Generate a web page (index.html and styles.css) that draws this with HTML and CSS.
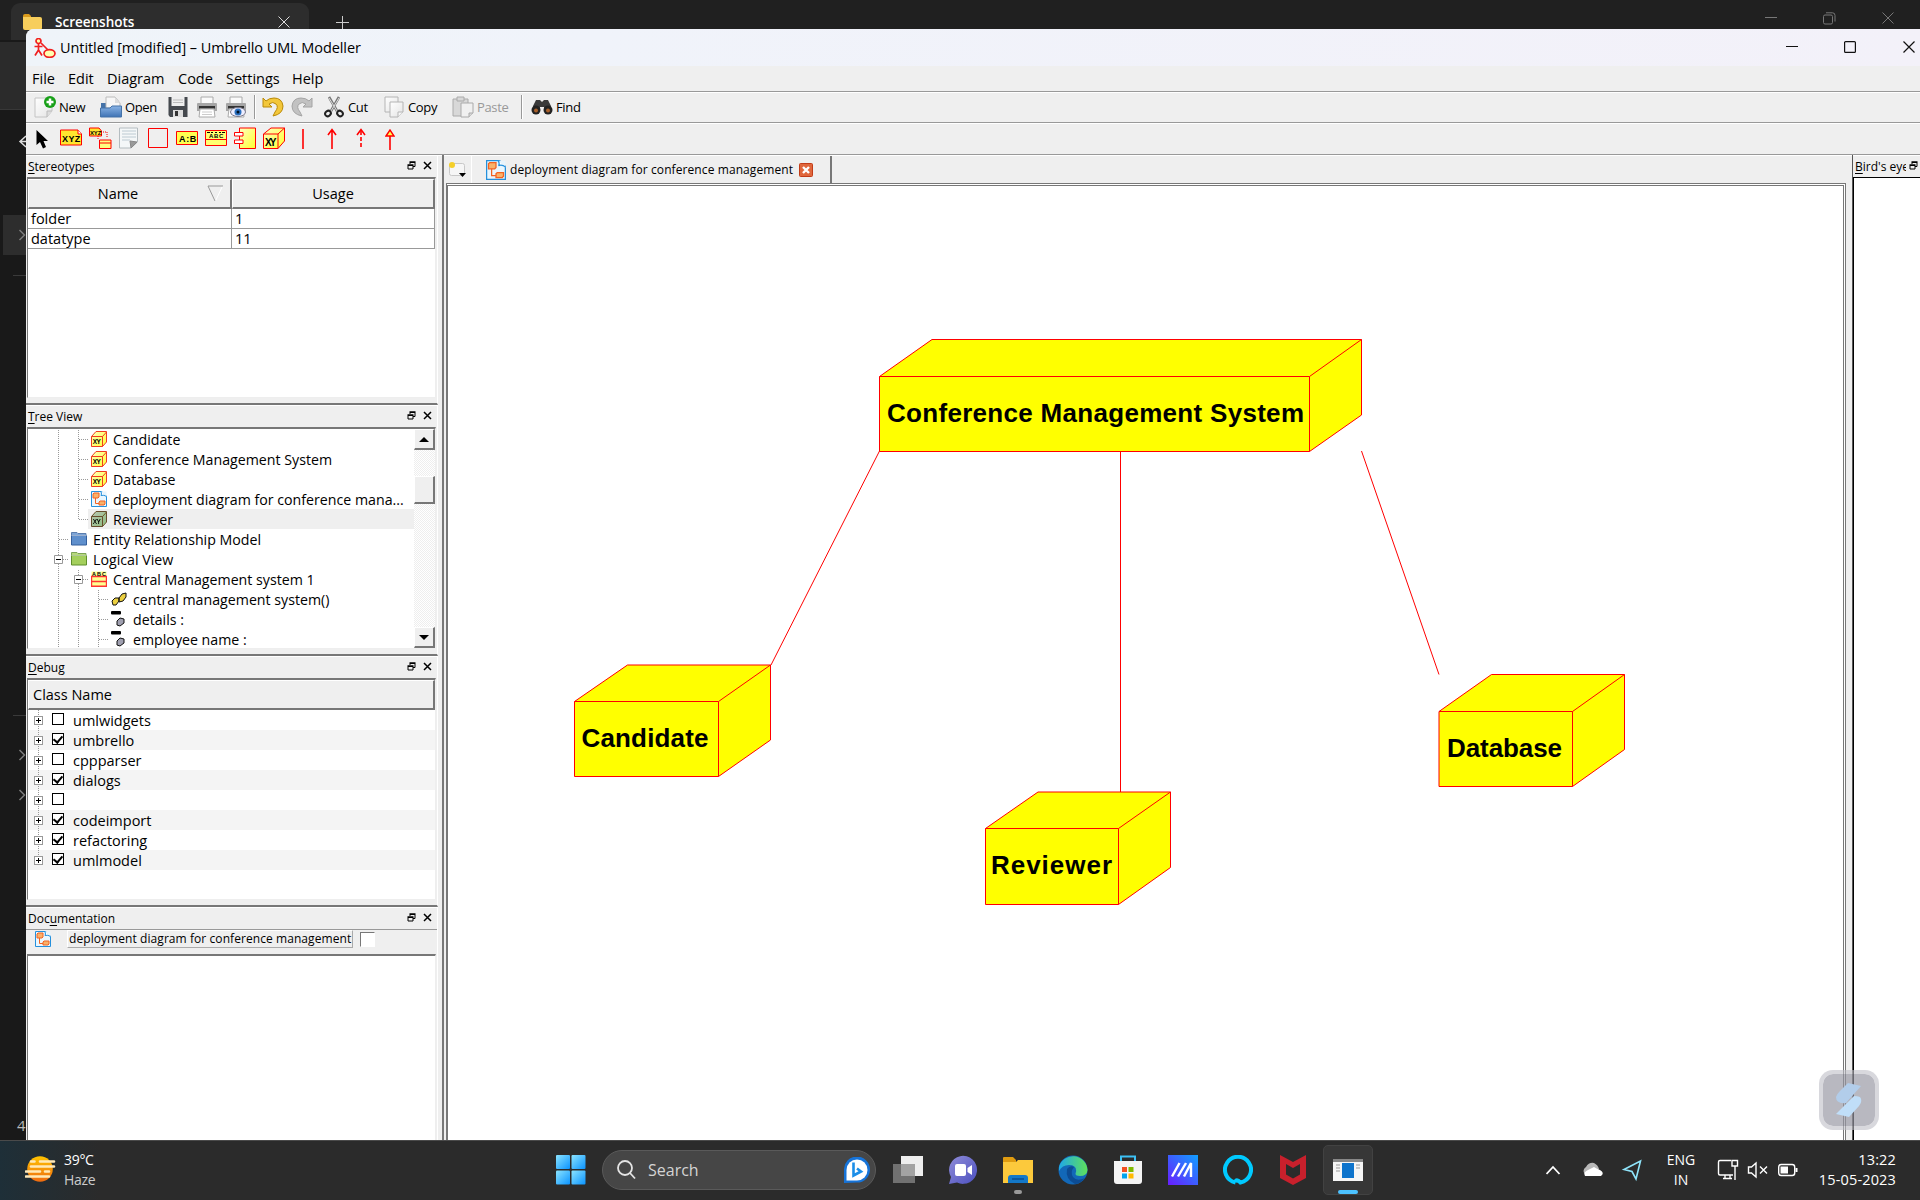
FILE: index.html
```html
<!DOCTYPE html>
<html lang="en">
<head>
<meta charset="utf-8">
<title>Umbrello UML Modeller</title>
<link rel="stylesheet" href="styles.css">
</head>
<body>
<svg class="defs" width="0" height="0">
  <defs>
    <linearGradient id="gy" x1="0" y1="0" x2="1" y2="1"><stop offset="0" stop-color="#ffffc0"/><stop offset="1" stop-color="#ffff30"/></linearGradient>
    <linearGradient id="gp" x1="0" y1="0" x2="1" y2="1"><stop offset="0" stop-color="#fff"/><stop offset="1" stop-color="#e4e4e4"/></linearGradient>
    <linearGradient id="gblue" x1="0" y1="0" x2="0" y2="1"><stop offset="0" stop-color="#8ab4e6"/><stop offset="1" stop-color="#3f73b4"/></linearGradient>
    <linearGradient id="gwin" x1="0" y1="0" x2="1" y2="1"><stop offset="0" stop-color="#8be4ff"/><stop offset="1" stop-color="#0a93ff"/></linearGradient>
    <linearGradient id="gsun" x1="0" y1="0" x2="0" y2="1"><stop offset="0" stop-color="#ffc400"/><stop offset="1" stop-color="#ee6a10"/></linearGradient>
    <linearGradient id="gedge" x1="0" y1="0" x2="1" y2="0"><stop offset="0" stop-color="#1fa8e8"/><stop offset="1" stop-color="#5fe05a"/></linearGradient>
    <linearGradient id="gma" x1="0" y1="1" x2="1" y2="0"><stop offset="0" stop-color="#6a1cff"/><stop offset="1" stop-color="#10a0ff"/></linearGradient>
    <linearGradient id="gchat" x1="0" y1="0" x2="1" y2="1"><stop offset="0" stop-color="#8f8cd8"/><stop offset="1" stop-color="#4c50c0"/></linearGradient>
  </defs>
  <symbol id="node" viewBox="0 0 16 16"><path d="M.500 5.500L5 .500H15.500V11L11.500 15.500H.500z" fill="url(#gy)" stroke="#f03c20"/><path d="M.500 5.500H11.500V15.500M11.500 5.500L15.500 1" fill="none" stroke="#f03c20"/><text x="1.800" y="13.300" font-size="6.500" font-weight="700" font-family="Liberation Sans, sans-serif" textLength="8">XY</text></symbol>
  <symbol id="diagram" viewBox="0 0 16 16"><path d="M.5.500H11L15.500 5V15.500H.500z" fill="#eaf6fd" stroke="#2590dc"/><path d="M10 .500L15.500 6V.500z" fill="#e8f4fc"/><path d="M10 .500q1 3 0 4q3-1 5.500 1" fill="#fff" stroke="#2590dc"/><path d="M2 3l1-1h5v4l-1 1H2zM8 11l1-1h5v3l-1 1H8z" fill="#f9b26a" stroke="#f26322"/><path d="M4.500 7v5.500H8" fill="none" stroke="#f26322"/></symbol>
  <symbol id="float" viewBox="0 0 9 9"><path d="M3 3V1.500H8V5.500H6M1 4.500H6V8H1z" fill="none" stroke="#000"/><path d="M2.500 1H8.500M.500 4H6.500" stroke="#000" stroke-width="1.600"/></symbol>
  <symbol id="close" viewBox="0 0 9 9"><path d="M1 1L8 8M8 1L1 8" stroke="#000" stroke-width="1.500"/></symbol>
  <symbol id="folder" viewBox="0 0 16 16"><path d="M.500 4V1.500H6L7 2.500H15V5H.500z" opacity=".8"/><path d="M.500 4.500H15.500V14H.500z"/><path d="M.500 4.500H15.500" stroke="#fff" stroke-opacity=".5"/></symbol>
  <symbol id="attr" viewBox="0 0 16 16"><rect x="0" y="0" width="10" height="3.500" rx="1"/><path d="M6 10l3-3 4 1v4l-4 3-3-1z" fill="#a0a0b0" stroke="#111"/></symbol>
  <symbol id="printer" viewBox="0 0 22 22"><path d="M5 1H17V8H5z" fill="#fafafa" stroke="#aaa"/><path d="M1 8q0-1 1-1H20q1 0 1 1V15H1z" fill="#a6a6a6"/><path d="M3 10H19V12.500H3z" fill="#333"/><path d="M4 13H18L19 21H3z" fill="#fff" stroke="#aaa"/><path d="M6 16H16M6 18.500H16" stroke="#ccc"/></symbol>
</svg>

<div class="explorer">
  <div class="ex-tabs">
    <div class="ex-tab">
      <svg width="19" height="16" viewBox="0 0 19 16"><path d="M0 2Q0 0 2 0H6L8 2V5H0z" fill="#d99a1c"/><path d="M0 3H17Q19 3 19 5V14Q19 16 17 16H2Q0 16 0 14z" fill="#f7ce5c"/></svg>
      <b>Screenshots</b>
      <svg width="12" height="12" viewBox="0 0 12 12"><path d="M.500.500L11.500 11.500M11.500.500L.500 11.500" stroke="#ddd"/></svg>
    </div>
    <svg class="ex-plus" width="13" height="13" viewBox="0 0 13 13"><path d="M6.500 0V13M0 6.500H13" stroke="#ccc"/></svg>
    <svg class="ex-ctl" width="130" height="14" viewBox="0 0 130 14" fill="none" stroke="#777"><path d="M0 5.500H12M117.500.500L128.500 11.500M128.500.500L117.500 11.500"/><rect x="58.500" y="3" width="9" height="9" rx="1.500"/><path d="M61 .800H67.500Q70 .800 70 3.500V9.500"/></svg>
  </div>
  <svg class="ex-side" width="26" height="1100" viewBox="0 40 26 1100" fill="none"><path d="M0 42H26V109H0z" fill="#2b2b2b"/><path d="M0 109.500H26" stroke="#383838"/><path d="M3 215H26V255H3z" fill="#2d2d2d"/><path d="M13 275.500H26M13 715.500H26" stroke="#3a3a3a"/><path d="M19.500 230l5 5-5 5M19.500 750l5 5-5 5M19.500 790l5 5-5 5" stroke="#7c7c7c" stroke-width="1.500"/><path d="M26 136l-6 5.500 6 5.500M20 141.500H26" stroke="#ddd" stroke-width="1.500"/><text x="17" y="1131" fill="#bbb" font-size="15" font-family="Open Sans, sans-serif">4</text></svg>
</div>

<main class="window">
  <header class="titlebar">
    <svg width="22" height="20" viewBox="0 0 22 20" fill="#ffffb0" stroke="#f02020" stroke-width="1.700"><circle cx="4.500" cy="3" r="2.500"/><path d="M4.500 6V12M.500 8.500H8.500M4.500 12L1 17.500M4.500 12L8 17.500M7 5L15 13" fill="none"/><ellipse cx="15.500" cy="15.500" rx="5.500" ry="3.800"/></svg>
    <span>Untitled [modified] – Umbrello UML Modeller</span>
    <svg class="win-ctl" width="130" height="13" viewBox="0 0 130 13" fill="none" stroke="#111" stroke-width="1.200"><path d="M0 5.500H12"/><rect x="58.600" y=".600" width="10.800" height="10.800" rx="1"/><path d="M117.500.500L128.500 11.500M128.500.500L117.500 11.500"/></svg>
  </header>
  <nav class="menubar"><span class="m1">File</span><span class="m2">Edit</span><span class="m3">Diagram</span><span class="m4">Code</span><span class="m5">Settings</span><span class="m6">Help</span></nav>

  <div class="toolbar">
    <div class="tool w66"><svg width="22" height="22" viewBox="0 0 22 22"><path d="M1 2H18V15L13 21H1z" fill="url(#gp)" stroke="#c4c4c4"/><path d="M18 15H13V21" fill="#ddd" stroke="#bbb"/><circle cx="16" cy="6" r="6" fill="#18a018"/><path d="M16 2.500V9.500M12.500 6H19.500" stroke="#fff" stroke-width="2.500"/></svg>New</div>
    <div class="tool w69"><svg width="22" height="22" viewBox="0 0 22 22"><path d="M1 21V7H6V1H15L20 7V21z" fill="#4573a8"/><path d="M6 12V1H15L20 7V12z" fill="#f7f7f7" stroke="#bbb"/><path d="M15 1V7H20" fill="#ddd"/><path d="M.500 12H10L12 10H21.500V21H.500z" fill="url(#gblue)" stroke="#4573a8"/></svg>Open</div>
    <div class="tool w28"><svg width="20" height="22" viewBox="0 0 20 22"><path d="M.500 1H19.500V21H2L.500 19z" fill="#45494e"/><path d="M3.500 1H16.500V10H3.500z" fill="#eee"/><path d="M5 4H15M5 6.500H15" stroke="#bbb"/><path d="M5 14H15V21H5z" fill="#ddd"/><path d="M7 15H10V20H7z" fill="#333"/></svg></div>
    <div class="tool w29"><svg width="22" height="22"><use href="#printer"/></svg></div>
    <div class="tool w29"><svg width="22" height="22" viewBox="0 0 22 22"><use href="#printer" width="22" height="22"/><ellipse cx="13" cy="16" rx="7.500" ry="4.500" fill="#eef" stroke="#778"/><circle cx="13" cy="16" r="3.500" fill="#2a70c0"/><circle cx="13" cy="16" r="1.500" fill="#012"/></svg></div>
    <i class="tsep"></i>
    <div class="tool w29"><svg width="22" height="20" viewBox="0 0 22 20"><path d="M1 1V10H10L7 7Q11 4 14 7T13 15L11 19Q21 17 21 9Q20 1 12 1Q7 1 4 4z" fill="#f3c73a" stroke="#b98908"/></svg></div>
    <div class="tool w33"><svg width="22" height="20" viewBox="0 0 22 20"><path d="M21 1V10H12L15 7Q11 4 8 7T9 15L11 19Q1 17 1 9Q2 1 10 1Q15 1 18 4z" fill="#c2c2c2" stroke="#a4a4a4"/></svg></div>
    <div class="tool w60"><svg width="20" height="22" viewBox="0 0 20 22" fill="none"><path d="M5 1L13 15M15 1L7 15" stroke="#777" stroke-width="2.600"/><path d="M5 2L13 15M15 2L7 15" stroke="#ddd"/><ellipse cx="4" cy="17.500" rx="3" ry="2.500" transform="rotate(-40 4 17.500)" stroke="#222" stroke-width="2"/><ellipse cx="16" cy="17.500" rx="3" ry="2.500" transform="rotate(40 16 17.500)" stroke="#222" stroke-width="2"/></svg><span class="cut">Cut</span></div>
    <div class="tool w68"><svg width="20" height="22" viewBox="0 0 20 22" fill="url(#gp)" stroke="#b4b4b4"><path d="M1 1H14V16H1z"/><path d="M6 6H19V16L14 21H6z"/><path d="M19 16H14V21"/></svg><span class="cut">Copy</span></div>
    <div class="tool w70 off"><svg width="22" height="22" viewBox="0 0 22 22" fill="#d8d8d8" stroke="#aaa"><path d="M1 3H16V20H1z"/><path d="M5 1H12V5H5z"/><path d="M9 7H21V17L17 21H9z" fill="#f0f0f0"/><path d="M21 17H17V21"/></svg>Paste</div>
    <i class="tsep s2"></i>
    <div class="tool"><svg width="22" height="22" viewBox="0 0 22 22"><path d="M2 10L5 4H9L11 6L13 4H17L20 10V15H13V11H9V15H2z" fill="#3a3a3a"/><circle cx="5" cy="14" r="4.500" fill="#222"/><circle cx="17" cy="14" r="4.500" fill="#222"/><circle cx="5" cy="14.500" r="2" fill="#a85f2a"/><circle cx="17" cy="14.500" r="2" fill="#a85f2a"/></svg>Find</div>
  </div>

  <div class="toolbar shapes">
    <svg width="350" height="24" viewBox="36 128 350 24" fill="none" stroke="#f00">
      <path d="M36.500 131V146L40 143L43 149.500L46 148L43.500 142H48z" fill="#000" stroke="none"/>
      <path d="M60.500 131H78L81.500 135V146H60.500z" fill="#ffe62e"/><path d="M78 131V135H81.500" fill="#fff"/>
      <path d="M89.500 129H99L101.500 132V137H89.500z" fill="#ffe62e"/><path d="M101 133H107V139M98 137V141" stroke-dasharray="1 1"/><path d="M99.500 141H111V149.500H99.500zM99.500 144H111" fill="#ffff80"/>
      <path d="M119.500 129H137.500V143L131 149H119.500z" fill="#f4f7f8" stroke="#b4bcc0"/><path d="M137 143L130 142L131 149z" fill="#999" stroke="#888"/><path d="M122 132H136M122 135H136M122 138H136M122 141H130" stroke="#bccad2"/>
      <path d="M148.500 129.500H167.500V148.500H148.500z"/>
      <path d="M176.500 132.500H197.500V145.500H176.500z" fill="#ffff50"/>
      <path d="M205.500 131.500H226.500V146.500H205.500zM205.500 140.500H226.500" fill="#ffff70"/>
      <path d="M239.500 129H255.500V149.500H239.500z" fill="url(#gy)"/><path d="M234.500 133.500H243V137H234.500zM234.500 141H243V144.500H234.500z" fill="#fff"/>
      <path d="M263.500 135L271 129H284.500V142L278 149.500H263.500z" fill="url(#gy)"/><path d="M263.500 135H278V149.500M278 135L284.500 129"/>
      <path d="M303 130V150M332 131V150M328 136L332 130.500L336 136" stroke-width="1.600" />
      <path d="M361 132V150" stroke-width="1.600" stroke-dasharray="4 2"/><path d="M357 136L361 130.500L365 136" stroke-width="1.600"/>
      <g fill="#000" stroke="none" font-family="Liberation Sans, sans-serif" font-weight="700"><text x="62" y="143" font-size="9" textLength="18">XYZ</text><text x="90" y="136" font-size="6" textLength="11">XYZ</text><text x="179" y="142.500" font-size="9" textLength="17">A:B</text><text x="209" y="139" font-size="6" textLength="14">ABC</text><path d="M207 133.500H210M211 133.500H213M215 133.500H217M219 133.500H221M222 133.500H225" stroke="#000"/><text x="265" y="147" font-size="10" textLength="11">XY</text></g>
    </svg>
    <svg class="openarrow" width="10" height="22" viewBox="0 0 10 22"><path d="M5 7V22" stroke="#f00" stroke-width="1.600"/><path d="M1 8L5 2L9 8z" fill="#ffff50" stroke="#f00" stroke-width="1.400"/></svg>
  </div>

  <div class="body">
    <aside class="left">
      <section class="dock d1">
        <h2><span><u>S</u>tereotypes</span><svg width="9" height="9"><use href="#float"/></svg><svg width="9" height="9"><use href="#close"/></svg></h2>
        <div class="frame">
          <div class="grid">
            <div class="th">Name<svg width="17" height="17" viewBox="0 0 17 17" fill="none"><path d="M15.500 1L8.500 16" stroke="#fff"/><path d="M16 1H1L8 16" stroke="#999"/></svg></div><div class="th">Usage</div>
            <div class="td">folder</div><div class="td">1</div>
            <div class="td">datatype</div><div class="td">11</div>
          </div>
        </div>
      </section>
      <section class="dock d2">
        <h2><span><u>T</u>ree View</span><svg width="9" height="9"><use href="#float"/></svg><svg width="9" height="9"><use href="#close"/></svg></h2>
        <div class="frame treeframe">
          <div class="tree">
            <svg class="guides" width="100" height="218" viewBox="29 429 100 218" fill="none" stroke="#999" stroke-dasharray="1 1"><path d="M58.500 430V647M78.500 430V519M78.500 570V647M98.500 590V647M79 439.500H88M79 459.500H88M79 479.500H88M79 499.500H88M79 519.500H88M59 539.500H68M63 559.500H68M83 579.500H88M99 599.500H108M99 619.500H108M99 639.500H108"/><g stroke-dasharray="none" fill="#fff"><path d="M54.500 555.500H62.500V563.500H54.500zM74.500 575.500H82.500V583.500H74.500z"/><path d="M56 559.500H61M76 579.500H81" stroke="#000"/></g></svg>
            <div class="row l3"><svg><use href="#node"/></svg>Candidate</div>
            <div class="row l3"><svg><use href="#node"/></svg>Conference Management System</div>
            <div class="row l3"><svg><use href="#node"/></svg>Database</div>
            <div class="row l3"><svg><use href="#diagram"/></svg>deployment diagram for conference mana...</div>
            <div class="row l3 sel"><svg><use href="#node"/></svg>Reviewer</div>
            <div class="row l2"><svg fill="#5f8fcc" stroke="#345f9c"><use href="#folder"/></svg>Entity Relationship Model</div>
            <div class="row l2"><svg fill="#a4cf5c" stroke="#5f8f2c"><use href="#folder"/></svg>Logical View</div>
            <div class="row l3"><svg viewBox="0 0 16 16"><path d="M.500.500H15.500V15.500H.500z" fill="#ffff90"/><path d="M0 5.500H16M0 10.500H16M0 15.300H16M.500 5V16M15.500 5V16" stroke="#f33" stroke-width="1.400"/><text x="1" y="4.500" font-size="5.500" font-weight="700" font-family="Liberation Sans, sans-serif" textLength="14">ABC</text></svg>Central Management system 1</div>
            <div class="row l4"><svg viewBox="0 0 16 16" fill="#ecd040" stroke="#111"><path d="M8 7l3-4 4-1v4l-3 4-4 1zM1 10l3-3h4v3l-3 4H2z"/></svg>central management system()</div>
            <div class="row l4"><svg><use href="#attr"/></svg>details :</div>
            <div class="row l4"><svg><use href="#attr"/></svg>employee name :</div>
          </div>
          <div class="scroll"><i class="btn up"></i><i class="thumb"></i><i class="btn down"></i></div>
        </div>
      </section>
      <section class="dock d3">
        <h2><span><u>D</u>ebug</span><svg width="9" height="9"><use href="#float"/></svg><svg width="9" height="9"><use href="#close"/></svg></h2>
        <div class="frame">
          <div class="th wide">Class Name</div>
          <div class="checks">
            <div class="ck"><i class="plus"></i><i class="box"></i>umlwidgets</div>
            <div class="ck"><i class="plus"></i><i class="box on"></i>umbrello</div>
            <div class="ck"><i class="plus"></i><i class="box"></i>cppparser</div>
            <div class="ck"><i class="plus"></i><i class="box on"></i>dialogs</div>
            <div class="ck"><i class="plus"></i><i class="box"></i></div>
            <div class="ck"><i class="plus"></i><i class="box on"></i>codeimport</div>
            <div class="ck"><i class="plus"></i><i class="box on"></i>refactoring</div>
            <div class="ck last"><i class="plus"></i><i class="box on"></i>umlmodel</div>
          </div>
        </div>
      </section>
      <section class="dock d4">
        <h2><span>Doc<u>u</u>mentation</span><svg width="9" height="9"><use href="#float"/></svg><svg width="9" height="9"><use href="#close"/></svg></h2>
        <div class="docline"><svg width="16" height="16"><use href="#diagram"/></svg><span class="label">deployment diagram for conference management</span><i></i></div>
        <div class="frame"></div>
      </section>
    </aside>

    <section class="center">
      <div class="tabs">
        <div class="newtab"><svg width="19" height="18" viewBox="0 0 19 18"><rect x="1.500" y="2.500" width="15" height="12" rx="2" fill="#f6f6f6" stroke="#c8c8c8"/><circle cx="4" cy="4" r="3" fill="#f5cf2a"/><path d="M11 12H18L14.500 16z"/></svg></div>
        <div class="tab"><svg width="20" height="20"><use href="#diagram"/></svg><span>deployment diagram for conference management</span><svg width="14" height="14" viewBox="0 0 14 14"><rect x=".500" y=".500" width="13" height="13" rx="1" fill="#e0673c" stroke="#c23c18"/><path d="M4 4L10 10M10 4L4 10" stroke="#fff" stroke-width="2.400"/></svg></div>
      </div>
      <div class="canvas">
        <svg width="1395" height="954" viewBox="448 186 1395 954" stroke="#f00" fill="#ff0">
          <g fill="none"><path d="M879.500 451L771 665M1120.500 451V792M1361.500 451L1439 674.500"/></g>
          <path d="M879.500 376.500L932 339.500H1361.500V415L1309.500 451.500H879.500zM879.500 376.500H1309.500V451.500M1309.500 376.500L1361.500 339.500"/>
          <path d="M574.500 701.500L627.500 665H770.500V740L718.500 776.500H574.500zM574.500 701.500H718.500V776.500M718.500 701.500L770.500 665"/>
          <path d="M985.500 828.500L1038 792H1170.500V867.500L1118.500 904.500H985.500zM985.500 828.500H1118.500V904.500M1118.500 828.500L1170.500 792"/>
          <path d="M1439 711.500L1491.500 674.500H1624.500V749.500L1572.500 786.500H1439zM1439 711.500H1572.500V786.500M1572.500 711.500L1624.500 674.500"/>
          <g class="names"><text x="887" y="421.500" textLength="417">Conference Management System</text><text x="581.500" y="747" textLength="127">Candidate</text><text x="991" y="873.500" textLength="121">Reviewer</text><text x="1447" y="756.500" textLength="115">Database</text></g>
        </svg>
      </div>
    </section>

    <aside class="right"><h2><span><u>B</u>ird's eye view</span><svg width="9" height="9"><use href="#float"/></svg></h2><div class="bird"></div></aside>
  </div>
</main>

<div class="floater"><svg width="26" height="34" viewBox="0 0 26 34"><path d="M12 0L25 3L10 20Q0 21 0 14Q1 11 4 8z" fill="#b2cdea"/><path d="M25 16Q25 13 18 13L0 31L13 34L23 23Q26 19 25 16z" fill="#c0def8"/></svg></div>

<footer class="taskbar">
  <svg class="sun" width="32" height="26" viewBox="0 0 32 26"><circle cx="15" cy="13" r="12.800" fill="url(#gsun)"/><path d="M6 5.500H9.500M15 5.500H29M6 10.500H29M1 15.500H15M20 15.500H24M1 20.500H24" stroke="#ffe9b8" stroke-width="2.600" stroke-linecap="round"/></svg>
  <div class="weather"><div>39°C</div><div>Haze</div></div>
  <svg class="start" width="30" height="30" viewBox="0 0 30 30" fill="url(#gwin)"><rect width="14" height="14" rx="1"/><rect x="15.500" width="14" height="14" rx="1"/><rect y="15.500" width="14" height="14" rx="1"/><rect x="15.500" y="15.500" width="14" height="14" rx="1"/></svg>
  <div class="search"><svg width="19" height="20" viewBox="0 0 19 20" fill="none" stroke="#e4e4e4" stroke-width="1.800"><circle cx="8" cy="8" r="7"/><path d="M13 13L18 18.500"/></svg><span>Search</span><svg width="26" height="26" viewBox="0 0 26 26"><path d="M0 26V13A13 13 0 1 1 13 25.500z" fill="#1673d8"/><path d="M2.500 23.500V13A10.500 10.500 0 1 1 13 23.500z" fill="#fff"/><path d="M9.500 5.500V18.500L17 14.500L13 11.500" fill="none" stroke="#1c8ee8" stroke-width="2.600"/></svg></div>
  <div class="apps">
    <div><svg viewBox="0 0 30 30"><path d="M8 1H30V21H8z" fill="#eee"/><path d="M0 9H22V28H0z" fill="#8a8a8a" fill-opacity=".75"/></svg></div>
    <div><svg viewBox="0 0 30 30"><path d="M1 29L3 22A14 14 0 1 1 9 27.500z" fill="url(#gchat)"/><rect x="7" y="9" width="11" height="12" rx="2" fill="#fff"/><path d="M19.500 13L24 10V20L19.500 17z" fill="#fff"/></svg></div>
    <div class="run"><svg viewBox="0 0 30 30"><path d="M0 7V3Q0 2 1 2H10L13 5V9H0z" fill="#e09c10"/><path d="M0 7H13L15 5H30V28H0z" fill="#fcc93c"/><path d="M5 28V23Q5 20 8 20H22Q25 20 25 23V28z" fill="#1478c8"/><path d="M9 24H21" stroke="#0a4f94" stroke-width="1.600"/></svg></div>
    <div><svg viewBox="0 0 30 30"><circle cx="15" cy="15" r="14.500" fill="#1268b8"/><path d="M1 12A14.500 14.500 0 0 1 29.500 15Q29 21 22 21Q16 21 18 17Q19 10 11 10Q4 10 1 16z" fill="url(#gedge)"/><path d="M9 14Q7 24 17 29Q22 29 27 23Q19 27 15 22Q12 17 16 12Q12 10 9 14z" fill="#0c4c94"/></svg></div>
    <div><svg viewBox="0 0 30 30"><path d="M8 8V1.500H22V8" fill="none" stroke="#3cc0f4" stroke-width="2"/><path d="M1 6H29V26Q29 29 26 29H4Q1 29 1 26z" fill="#f4f4f4"/><path d="M9 12h5v5H9z" fill="#f25022"/><path d="M15.500 12h5v5h-5z" fill="#7fba00"/><path d="M9 18.500h5v5H9z" fill="#00a4ef"/><path d="M15.500 18.500h5v5h-5z" fill="#ffb900"/></svg></div>
    <div><svg viewBox="0 0 30 30"><path d="M0 0H30V30H0z" fill="url(#gma)"/><path d="M4 21.500L11.500 8M10 21.500L18 8" fill="none" stroke="#fff" stroke-width="2.400"/><path d="M16 21.500L23 8V22" fill="none" stroke="#fff" stroke-width="2.400"/></svg></div>
    <div><svg viewBox="0 0 30 30"><path d="M12.500 27.500A13 13 0 1 1 17.500 27.500Q13 23 12.500 27.500" fill="none" stroke="#00caff" stroke-width="4"/></svg></div>
    <div><svg viewBox="0 0 30 30"><path d="M2 0L15 7L28 0V23L15 30L2 23z" fill="#c8202c"/><path d="M8 9L15 13L22 9V19.500L15 23.500L8 19.500z" fill="#2b2b2b"/></svg></div>
    <div class="active"><svg viewBox="0 0 30 30"><path d="M0 4H30V26H0z" fill="#f6f6f6"/><path d="M0 4H30V7H0z" fill="#888"/><path d="M9 8H21V23H9z" fill="#0e74cc"/><path d="M3 10H7M3 13H7M3 16H7M23 10H27M23 13H27" stroke="#999"/></svg></div>
  </div>
  <svg class="tray1" width="96" height="24" viewBox="1546 1158 96 24" fill="none"><path d="M1546.500 1174L1553 1167L1559.500 1174" stroke="#fff" stroke-width="1.800"/><path d="M1587 1176A5 5 0 0 1 1586 1167Q1589 1162 1594 1163Q1598 1165 1599 1169L1593 1176z" fill="#b8b8b8"/><path d="M1585 1176Q1583 1172 1588 1170L1594 1167Q1597 1169 1600 1170Q1605 1173 1601 1176z" fill="#fff"/><path d="M1624 1169.500L1640.500 1161L1636 1179L1632 1171.500z" stroke="#8fe4fa" stroke-width="1.600"/></svg>
  <div class="lang"><div>ENG</div><div>IN</div></div>
  <svg class="tray2" width="82" height="24" viewBox="1717 1158 82 24" fill="none" stroke="#fff" stroke-width="1.400"><path d="M1731 1160.500H1720Q1718.500 1160.500 1718.500 1162V1173.500Q1718.500 1175 1720 1175H1733M1723 1178.500H1732M1725 1175V1178M1730 1175V1178M1735 1166V1180M1732 1160.500H1737.500V1166H1732z"/><path d="M1748.500 1167V1173H1751.500L1756 1177V1163L1751.500 1167zM1760 1166.500L1767 1173.500M1767 1166.500L1760 1173.500"/><rect x="1778.700" y="1164.500" width="16" height="11" rx="2.500"/><path d="M1780.500 1166.500H1788V1173.500H1780.500z" fill="#fff" stroke="none"/><path d="M1796.500 1168V1172" stroke-width="2"/></svg>
  <div class="clock"><div>13:22</div><div>15-05-2023</div></div>
</footer>
</body>
</html>
```
FILE: styles.css
```css
* { box-sizing: border-box; }
body { margin: 0; width: 1920px; height: 1200px; overflow: hidden; position: relative; background: #191919; font-family: "Open Sans", "Noto Sans", sans-serif; font-size: 14px; color: #000; white-space: nowrap; }
svg { display: block; flex: none; }
.defs { position: absolute; }

/* file explorer behind the window */
.explorer { position: absolute; inset: 0 0 60px 0; background: #191919; }
.ex-tabs { height: 40px; display: flex; background: #202020; }
.ex-tab { width: 298px; margin: 3px 0 0 11px; padding: 1px 19px 0 12px; display: flex; align-items: center; background: #2d2d2d; border-radius: 9px 9px 0 0; color: #fff; font-size: 13.5px; }
.ex-tab b { flex: 1; margin-left: 13px; font-weight: 600; }
.ex-plus { margin: 16px 0 0 27px; }
.ex-ctl { margin: 12px 25px 0 auto; }

/* application window */
.window { position: absolute; left: 26px; top: 29px; width: 1894px; height: 1111px; background: #efefef; border-radius: 8px 0 0 0; overflow: hidden; display: flex; flex-direction: column; }
.titlebar { height: 37px; flex: none; display: flex; align-items: center; padding: 0 4px 0 8px; background: linear-gradient(90deg, #eff4f9, #f0f3fa 30%, #f3f1f9); font-size: 14.500px; }
.titlebar span { margin: 0 0 0 4px; letter-spacing: -.08px; }
.win-ctl { margin: 0 0 0 auto; }
.menubar { height: 26px; flex: none; display: flex; align-items: center; padding: 0 0 0 6px; border-bottom: 1px solid #999; box-shadow: 0 1px #fff; font-size: 14.500px; }
.m1 { width: 36px; } .m2 { width: 39px; } .m3 { width: 71px; } .m4 { width: 48px; } .m5 { width: 66px; }
.menubar + .toolbar { height: 31px; }
.toolbar { height: 32px; flex: none; display: flex; align-items: center; padding-left: 8px; border-bottom: 1px solid #999; box-shadow: 0 1px #fff; font-size: 13px; letter-spacing: -.35px; }
.tool { display: flex; align-items: center; gap: 3px; }
.cut { margin-left: 1px; }
.off { color: #999; }
.w66 { width: 66px; } .w69 { width: 68px; } .w28 { width: 28px; } .w29 { width: 29px; } .w33 { width: 33px; } .w60 { width: 60px; } .w68 { width: 68px; } .w70 { width: 69px; }
.tsep { width: 2px; height: 24px; margin: 0 6px 0 0; border-left: 1px solid #999; border-right: 1px solid #fff; }
.tsep.s2 { margin-right: 8px; }
.shapes { padding-left: 10px; height: 32px; }
.openarrow { margin-left: -1px; }
.body { flex: 1; display: flex; min-height: 0; }

/* docks */
.left { width: 418px; flex: none; display: flex; flex-direction: column; padding-right: 4px; border-right: 2px solid #777; }
.dock { flex: none; display: flex; flex-direction: column; padding-bottom: 5px; border-bottom: 2px solid #777; border-right: 1px solid #fff; }
.d1 { height: 250px; } .d2 { height: 251px; } .d3 { height: 251px; } .d4 { flex: 1; border-bottom: 0; padding: 0; }
h2 { height: 22px; margin: 0; flex: none; display: flex; align-items: center; padding: 0 5px 0 2px; border-top: 1px solid #fff; font-size: 12px; font-weight: 400; gap: 7px; }
h2 span { flex: 1; }
h2 svg { margin-bottom: 3px; }
u { text-underline-offset: 2px; }
.frame { flex: 1; min-height: 0; margin: 0 1px 0 1px; border: 1px solid #eee; border-top: 2px solid #777; border-left: 1px solid #777; background: #fff; overflow: hidden; }
.grid { display: grid; grid-template-columns: 204px 203px; grid-template-rows: 30px 20px 20px; width: 407px; }
.th { position: relative; display: flex; align-items: center; justify-content: center; background: #efefef; border: 1px solid #fff; border-right: 2px solid #777; border-bottom: 2px solid #777; padding-right: 23px; }
.th + .th { padding-right: 0; }
.th svg { position: absolute; right: 6px; top: 5px; }
.td { padding-left: 3px; line-height: 19px; border-right: 1px solid #999; border-bottom: 1px solid #999; }
.wide { height: 30px; width: 407px; justify-content: flex-start; padding-left: 4px; }
.grid, .checks, .wide { font-size: 14.500px; }
.tree { font-size: 14.200px; }
.treeframe { display: flex; }
.tree { position: relative; width: 386px; height: 220px; flex: none; }
.guides { position: absolute; left: 1px; top: 0; }
.row { height: 20px; display: flex; align-items: center; gap: 6px; }
.row svg:first-child { width: 16px; height: 16px; }
.l2 { margin-left: 43px; } .l3 { margin-left: 60px; padding-left: 3px; } .l4 { margin-left: 83px; }
.sel { background: #efefef; }
.sel svg { filter: hue-rotate(40deg) saturate(.45) brightness(.8); }
.scroll { flex: 1; display: flex; flex-direction: column; background: repeating-conic-gradient(#eee 0 25%, #fff 0 50%) 0 0 / 2px 2px; }
.btn, .thumb { height: 21px; background: #efefef; border: 1px solid #fff; border-right: 2px solid #777; border-bottom: 2px solid #777; display: flex; align-items: center; justify-content: center; }
.btn::after { content: ""; border: 5px solid transparent; }
.up::after { border-bottom-color: #000; border-top-width: 0; }
.down { margin-top: auto; }
.down::after { border-top-color: #000; border-bottom-width: 0; }
.thumb { height: 28px; margin-top: 26px; }
.ck { height: 20px; display: flex; align-items: center; padding-left: 6px; background: repeating-linear-gradient(#999 0 1px, transparent 1px 2px) 10px 0 / 1px 100% no-repeat; }
.ck:nth-child(even) { background-color: #f4f4f4; }
.ck.last { background-size: 1px 10px; }
.plus { width: 9px; height: 9px; border: 1px solid #999; background: linear-gradient(#000, #000) center / 5px 1px no-repeat, linear-gradient(#000, #000) center / 1px 5px no-repeat, #fff; }
.box { width: 12px; height: 12px; border: 1px solid #000; background: #fff; margin: 0 9px 3px 9px; display: flex; justify-content: center; }
.on::after { content: ""; width: 4px; height: 7px; border: solid #000; border-width: 0 2px 2px 0; transform: rotate(40deg); }
.docline { height: 25px; flex: none; border-top: 1px solid #999; display: flex; align-items: center; padding: 0 0 6px 9px; font-size: 12px; }
.d4 .frame { border-bottom: 0; }
.docline span { margin-left: 16px; height: 18px; line-height: 16px; padding-left: 1px; width: 286px; letter-spacing: .07px; border: 1px solid #aaa; border-top-color: #fff; border-left-color: #fff; }
.docline i { width: 15px; height: 15px; margin-left: 7px; background: #fff; border: 1px solid #fff; border-top-color: #777; border-left-color: #777; }

/* diagram area */
.center { flex: 1; display: flex; flex-direction: column; border-top: 1px solid #fff; }
.tabs { height: 27px; flex: none; display: flex; }
.newtab { width: 27px; padding: 5px 0 0 4px; }
.tab { width: 361px; display: flex; align-items: center; padding-left: 14px; border-left: 1px solid #fff; border-right: 2px solid #777; font-size: 12px; }
.tab span { width: 284px; margin: 0 5px 0 4px; letter-spacing: .09px; }
.canvas { flex: 1; width: 1400px; margin: 0 0 0 2px; overflow: hidden; background: #fff; border-top: 3px double #777; border-left: 2px solid #777; border-right: 3px double #777; }
.names { fill: #000; stroke: none; font: bold 26px "Liberation Sans", sans-serif; }
.right { width: 68px; flex: none; margin-left: 0; border-left: 1px solid #555; display: flex; flex-direction: column; overflow: hidden; }
.right h2 { padding: 0 0 0 2px; gap: 3px; }
.right h2 span { flex: none; width: 51px; overflow: hidden; }
.bird { flex: 1; background: #fff; border-top: 1px solid #000; border-left: 1px solid #000; }

.floater { position: absolute; left: 1819px; top: 1070px; width: 60px; height: 60px; border: 4px solid rgba(190,190,198,.6); border-radius: 14px; background: rgba(150,150,162,.68); background-clip: padding-box; display: flex; align-items: center; justify-content: center; }

/* taskbar */
.taskbar { position: absolute; left: 0; top: 1140px; width: 1920px; height: 60px; display: flex; align-items: center; background: linear-gradient(90deg, #1e2f38, #2b2b2b 100px); border-top: 1px solid #4a4a4a; padding-bottom: 1px; color: #fff; font-size: 14px; line-height: 20px; }
.sun { margin: 0 0 3px 25px; }
.weather { margin: 0 0 1px 7px; width: 60px; letter-spacing: -.3px; }
.weather div + div { color: #ccc; }
.start { margin-left: 432px; }
.search { margin-left: 16px; width: 274px; height: 40px; border-radius: 20px; background: #464646; border: 1px solid #5a5a5a; display: flex; align-items: center; padding: 0 5px 0 14px; font-size: 16px; color: #d4d4d4; }
.search span { flex: 1; margin-left: 12px; }
.apps { display: flex; margin-left: 4px; }
.apps div { width: 50px; height: 50px; margin: 0 2.500px; display: flex; align-items: center; justify-content: center; position: relative; border-radius: 5px; }
.apps svg { width: 30px; height: 30px; }
.apps .active { background: #373737; border: 1px solid #424242; }
.active::after, .run::after { content: ""; position: absolute; bottom: 0; width: 20px; height: 4px; border-radius: 2px; background: #4cc2ff; }
.run::after { width: 8px; background: #999; bottom: 1px; }
.tray1 { margin-left: 171px; }
.lang { width: 78px; text-align: center; }
.tray2 { margin-left: -3px; }
.clock { margin-left: auto; margin-right: 24px; text-align: right; font-size: 14.500px; letter-spacing: .15px; }
```
